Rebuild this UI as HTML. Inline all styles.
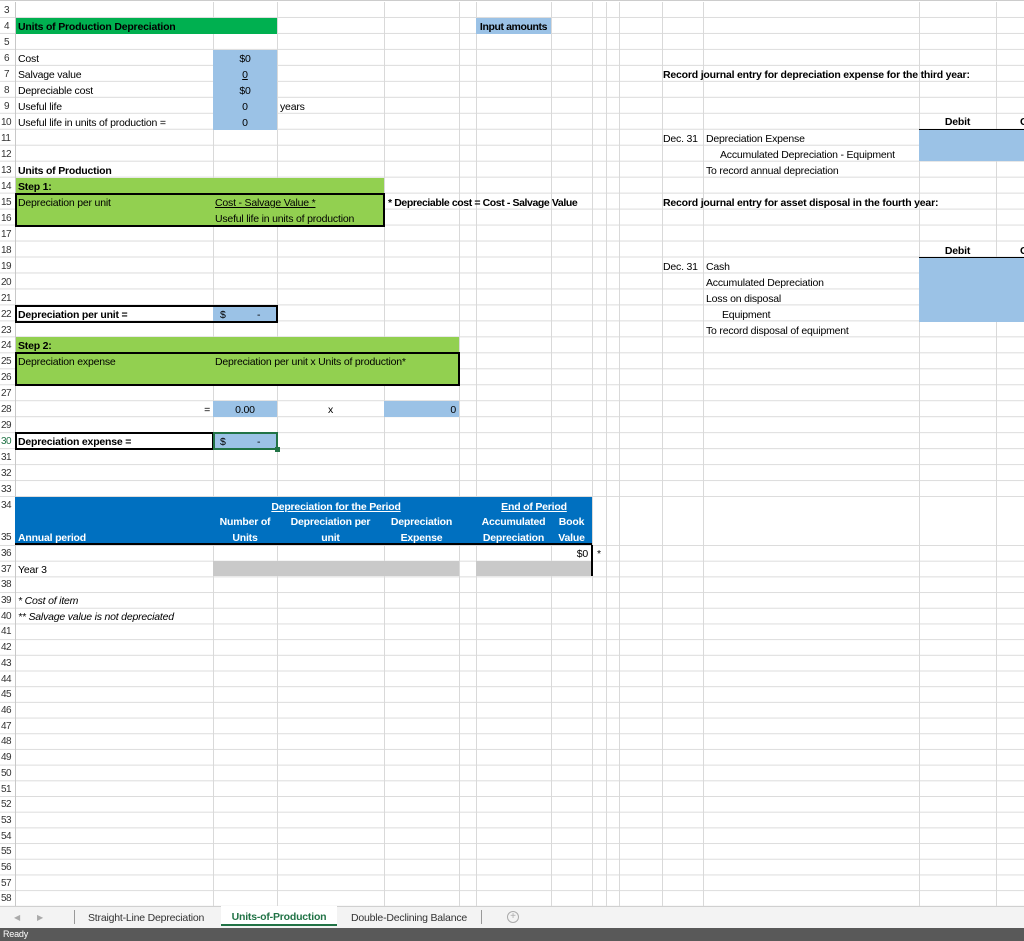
<!DOCTYPE html>
<html><head><meta charset="utf-8"><style>
*{margin:0;padding:0;box-sizing:border-box}
body{width:1024px;height:941px;position:relative;overflow:hidden;background:#fff;font-family:"Liberation Sans",Arial,sans-serif;font-size:10.5px;letter-spacing:-0.2px;color:#000}
.a{position:absolute;white-space:nowrap;line-height:16px;height:16px;padding-top:1px}
.b{font-weight:bold}
.v{position:absolute;top:2px;height:904px;width:1px;background:#d9d9d9}
.f{position:absolute}
.rn{position:absolute;left:1px;width:14px;line-height:16px;height:16px;padding-top:1px;font-size:10px;color:#333;letter-spacing:-0.5px}
.c{text-align:center}
.r{text-align:right}
.w{color:#fff}
</style></head><body>
<div class="f" style="left:0;top:0;width:1024px;height:1px;background:#ccc"></div>
<div class="f" style="left:0;top:2px;width:1024px;height:495px;background:linear-gradient(to bottom,transparent 0,transparent 15px,#dcdcdc 15px,#dcdcdc 16px) 0 0/100% 15.97px repeat-y"></div>
<div class="f" style="left:0;top:545px;width:1024px;height:362px;background:linear-gradient(to bottom,#dcdcdc 0,#dcdcdc 1px,transparent 1px) 0 0/100% 15.7px repeat-y"></div>
<div class="v" style="left:15px;background:#c8c8c8"></div>
<div class="v" style="left:213px"></div><div class="v" style="left:277px"></div><div class="v" style="left:384px"></div><div class="v" style="left:459px"></div><div class="v" style="left:476px"></div><div class="v" style="left:551px"></div><div class="v" style="left:592px"></div><div class="v" style="left:606px"></div><div class="v" style="left:619px"></div><div class="v" style="left:662px"></div><div class="v" style="left:703px"></div><div class="v" style="left:919px"></div><div class="v" style="left:996px"></div>

<div class="rn" style="top:2px;left:4px">3</div><div class="rn" style="top:18px;left:4px">4</div><div class="rn" style="top:34px;left:4px">5</div><div class="rn" style="top:50px;left:4px">6</div><div class="rn" style="top:66px;left:4px">7</div><div class="rn" style="top:82px;left:4px">8</div><div class="rn" style="top:98px;left:4px">9</div><div class="rn" style="top:114px">10</div><div class="rn" style="top:130px">11</div><div class="rn" style="top:146px">12</div><div class="rn" style="top:162px">13</div><div class="rn" style="top:178px">14</div><div class="rn" style="top:194px">15</div><div class="rn" style="top:210px">16</div><div class="rn" style="top:226px">17</div><div class="rn" style="top:242px">18</div><div class="rn" style="top:258px">19</div><div class="rn" style="top:274px">20</div><div class="rn" style="top:290px">21</div><div class="rn" style="top:306px">22</div><div class="rn" style="top:322px">23</div><div class="rn" style="top:337px">24</div><div class="rn" style="top:353px">25</div><div class="rn" style="top:369px">26</div><div class="rn" style="top:385px">27</div><div class="rn" style="top:401px">28</div><div class="rn" style="top:417px">29</div><div class="rn" style="top:433px;color:#217346">30</div><div class="rn" style="top:449px">31</div><div class="rn" style="top:465px">32</div><div class="rn" style="top:481px">33</div><div class="rn" style="top:497px">34</div><div class="rn" style="top:529px">35</div><div class="rn" style="top:545px">36</div><div class="rn" style="top:561px">37</div><div class="rn" style="top:576px">38</div><div class="rn" style="top:592px">39</div><div class="rn" style="top:608px">40</div><div class="rn" style="top:623px">41</div><div class="rn" style="top:639px">42</div><div class="rn" style="top:655px">43</div><div class="rn" style="top:671px">44</div><div class="rn" style="top:686px">45</div><div class="rn" style="top:702px">46</div><div class="rn" style="top:718px">47</div><div class="rn" style="top:733px">48</div><div class="rn" style="top:749px">49</div><div class="rn" style="top:765px">50</div><div class="rn" style="top:781px">51</div><div class="rn" style="top:796px">52</div><div class="rn" style="top:812px">53</div><div class="rn" style="top:828px">54</div><div class="rn" style="top:843px">55</div><div class="rn" style="top:859px">56</div><div class="rn" style="top:875px">57</div><div class="rn" style="top:890px">58</div>

<div class="f" style="left:16px;top:18px;width:261px;height:16px;background:#00b050"></div>
<div class="a b" style="left:18px;top:18px">Units of Production Depreciation</div>
<div class="f" style="left:476px;top:18px;width:75px;height:16px;background:#9bc2e6"></div>
<div class="a b c" style="left:476px;top:18px;width:75px;letter-spacing:-0.4px">Input amounts</div>

<div class="f" style="left:213px;top:50px;width:64px;height:80px;background:#9bc2e6"></div>
<div class="a" style="left:18px;top:50px">Cost</div><div class="a c" style="left:213px;top:50px;width:64px">$0</div>
<div class="a" style="left:18px;top:66px">Salvage value</div><div class="a c" style="left:213px;top:66px;width:64px;text-decoration:underline">0</div>
<div class="a" style="left:18px;top:82px">Depreciable cost</div><div class="a c" style="left:213px;top:82px;width:64px">$0</div>
<div class="a" style="left:18px;top:98px">Useful life</div><div class="a c" style="left:213px;top:98px;width:64px">0</div><div class="a" style="left:280px;top:98px">years</div>
<div class="a" style="left:18px;top:114px">Useful life in units of production =</div><div class="a c" style="left:213px;top:114px;width:64px">0</div>

<div class="a b" style="left:18px;top:162px">Units of Production</div>
<div class="f" style="left:16px;top:178px;width:368px;height:48px;background:#92d050"></div>
<div class="f" style="left:15px;top:193px;width:370px;height:34px;border:2px solid #000"></div>
<div class="a b" style="left:18px;top:178px">Step 1:</div>
<div class="a" style="left:18px;top:194px">Depreciation per unit</div>
<div class="a" style="left:215px;top:194px;text-decoration:underline">Cost - Salvage Value *</div>
<div class="a" style="left:215px;top:210px">Useful life in units of production</div>
<div class="a b" style="left:388px;top:194px;letter-spacing:-0.4px">* Depreciable cost = Cost - Salvage Value</div>

<div class="f" style="left:213px;top:306px;width:64px;height:16px;background:#9bc2e6"></div>
<div class="f" style="left:15px;top:305px;width:263px;height:18px;border:2px solid #000"></div>
<div class="a b" style="left:18px;top:306px">Depreciation per unit =</div>
<div class="a" style="left:220px;top:306px">$</div><div class="a" style="left:257px;top:306px">-</div>

<div class="f" style="left:16px;top:337px;width:443px;height:48px;background:#92d050"></div>
<div class="f" style="left:15px;top:352px;width:445px;height:34px;border:2px solid #000"></div>
<div class="a b" style="left:18px;top:337px">Step 2:</div>
<div class="a" style="left:18px;top:353px">Depreciation expense</div>
<div class="a" style="left:215px;top:353px">Depreciation per unit x Units of production*</div>

<div class="a r" style="left:150px;top:401px;width:60px">=</div>
<div class="f" style="left:213px;top:401px;width:64px;height:16px;background:#9bc2e6"></div>
<div class="a c" style="left:213px;top:401px;width:64px">0.00</div>
<div class="a c" style="left:277px;top:401px;width:107px">x</div>
<div class="f" style="left:384px;top:401px;width:75px;height:16px;background:#9bc2e6"></div>
<div class="a r" style="left:384px;top:401px;width:72px">0</div>

<div class="f" style="left:15px;top:432px;width:199px;height:18px;border:2px solid #000"></div>
<div class="f" style="left:213px;top:432px;width:65px;height:18px;background:#9bc2e6;border:2px solid #217346"></div>
<div class="f" style="left:275px;top:447px;width:5px;height:5px;background:#217346"></div>
<div class="a b" style="left:18px;top:433px">Depreciation expense =</div>
<div class="a" style="left:220px;top:433px">$</div><div class="a" style="left:257px;top:433px">-</div>

<div class="f" style="left:15px;top:497px;width:577px;height:48px;background:#0070c0;border-bottom:2px solid #000"></div>
<div class="a b w c" style="left:213px;top:498px;width:246px"><span style="text-decoration:underline">Depreciation for the Period</span></div>
<div class="a b w c" style="left:476px;top:498px;width:116px"><span style="text-decoration:underline">End of Period</span></div>
<div class="a b w c" style="left:213px;top:513px;width:64px">Number of</div><div class="a b w c" style="left:213px;top:529px;width:64px">Units</div>
<div class="a b w c" style="left:277px;top:513px;width:107px">Depreciation per</div><div class="a b w c" style="left:277px;top:529px;width:107px">unit</div>
<div class="a b w c" style="left:384px;top:513px;width:75px">Depreciation</div><div class="a b w c" style="left:384px;top:529px;width:75px">Expense</div>
<div class="a b w c" style="left:476px;top:513px;width:75px">Accumulated</div><div class="a b w c" style="left:476px;top:529px;width:75px">Depreciation</div>
<div class="a b w c" style="left:551px;top:513px;width:41px">Book</div><div class="a b w c" style="left:551px;top:529px;width:41px">Value</div>
<div class="a b w" style="left:18px;top:529px">Annual period</div>
<div class="a r" style="left:551px;top:545px;width:37px">$0</div>
<div class="a" style="left:597px;top:545px">*</div>
<div class="f" style="left:591px;top:545px;width:2px;height:31px;background:#000"></div>
<div class="a" style="left:18px;top:561px">Year 3</div>
<div class="f" style="left:213px;top:561px;width:246px;height:15px;background:#c9c9c9"></div>
<div class="f" style="left:476px;top:561px;width:115px;height:15px;background:#c9c9c9"></div>
<div class="a" style="left:18px;top:592px;font-style:italic">* Cost of item</div>
<div class="a" style="left:18px;top:608px;font-style:italic">** Salvage value is not depreciated</div>

<div class="a b" style="left:663px;top:66px">Record journal entry for depreciation expense for the third year:</div>
<div class="a b c" style="left:919px;top:113px;width:77px">Debit</div>
<div class="a b" style="left:1020px;top:113px">C</div>
<div class="f" style="left:919px;top:129px;width:105px;height:1px;background:#000"></div>
<div class="f" style="left:919px;top:130px;width:105px;height:31px;background:#9bc2e6"></div>
<div class="a" style="left:663px;top:130px">Dec. 31</div><div class="a" style="left:706px;top:130px">Depreciation Expense</div>
<div class="a" style="left:720px;top:146px">Accumulated Depreciation - Equipment</div>
<div class="a" style="left:706px;top:162px">To record annual depreciation</div>

<div class="a b" style="left:663px;top:194px">Record journal entry for asset disposal in the fourth year:</div>
<div class="a b c" style="left:919px;top:242px;width:77px">Debit</div>
<div class="a b" style="left:1020px;top:242px">C</div>
<div class="f" style="left:919px;top:257px;width:105px;height:1px;background:#000"></div>
<div class="f" style="left:919px;top:258px;width:105px;height:64px;background:#9bc2e6"></div>
<div class="a" style="left:663px;top:258px">Dec. 31</div><div class="a" style="left:706px;top:258px">Cash</div>
<div class="a" style="left:706px;top:274px">Accumulated Depreciation</div>
<div class="a" style="left:706px;top:290px">Loss on disposal</div>
<div class="a" style="left:722px;top:306px">Equipment</div>
<div class="a" style="left:706px;top:322px">To record disposal of equipment</div>

<div class="f" style="left:0;top:906px;width:1024px;height:22px;background:#f3f3f3;border-top:1px solid #d0d0d0"></div>
<div class="a" style="left:14px;top:909px;color:#aaa;font-size:8px">◀</div>
<div class="a" style="left:37px;top:909px;color:#aaa;font-size:8px">▶</div>
<div class="f" style="left:74px;top:910px;width:1px;height:14px;background:#999"></div>
<div class="a" style="left:88px;top:909px;color:#333">Straight-Line Depreciation</div>
<div class="f" style="left:221px;top:906px;width:116px;height:20px;background:#fff;border-bottom:2px solid #217346"></div>
<div class="a b c" style="left:221px;top:908px;width:116px;color:#217346">Units-of-Production</div>
<div class="a" style="left:351px;top:909px;color:#333">Double-Declining Balance</div>
<div class="f" style="left:481px;top:910px;width:1px;height:14px;background:#999"></div>
<div class="f" style="left:507px;top:911px;width:12px;height:12px;border:1px solid #aaa;border-radius:50%"></div>
<div class="a c" style="left:507px;top:908px;width:12px;color:#aaa;font-size:10px">+</div>
<div class="f" style="left:0;top:928px;width:1024px;height:13px;background:#595959"></div>
<div class="a" style="left:3px;top:928px;height:13px;line-height:13px;padding-top:0;color:#fff;font-size:9px">Ready</div>
</body></html>
